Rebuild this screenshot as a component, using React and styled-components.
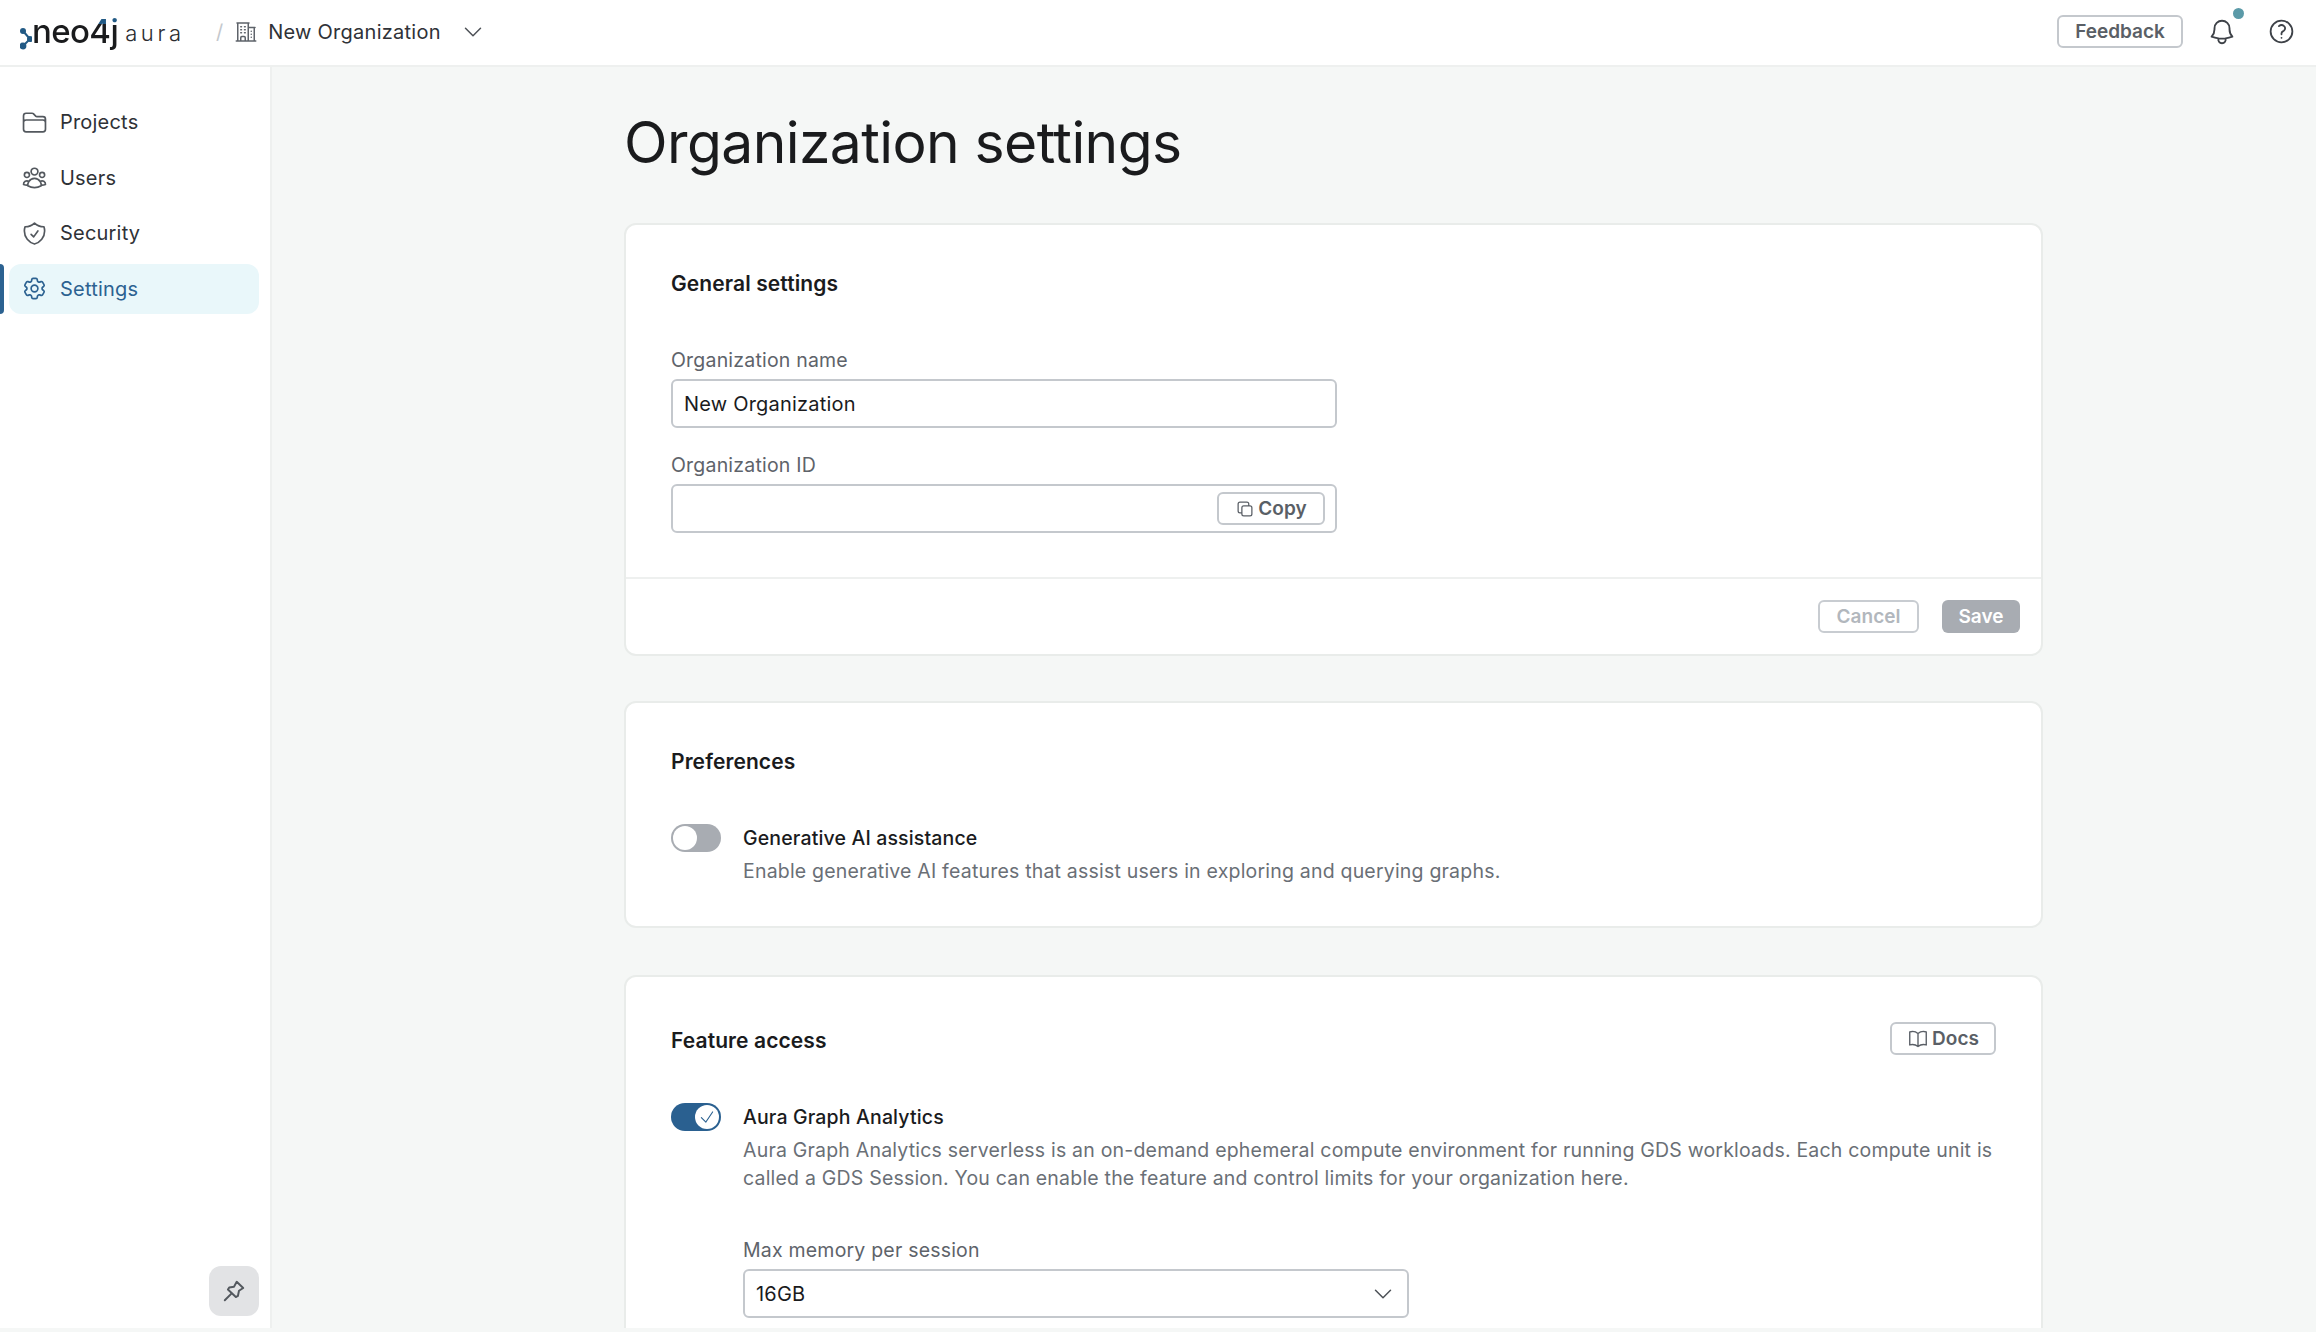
import React from 'react';
import styled, { createGlobalStyle } from 'styled-components';
import {
  HiOutlineFolder, HiOutlineUserGroup, HiOutlineShieldCheck, HiOutlineCog6Tooth,
  HiOutlineBuildingOffice2, HiOutlineChevronDown, HiOutlineBell, HiOutlineQuestionMarkCircle,
  HiOutlineBookOpen, HiOutlineSquare2Stack, HiOutlineCheck,
} from 'react-icons/hi2';

const Global = createGlobalStyle`
  html, body { margin: 0; padding: 0; background: #f5f7f6; height: 100%; overflow: hidden; }
  * { box-sizing: border-box; }
  body { font-family: Inter, "Liberation Sans", sans-serif; color: #1a1b1d; }
`;

const Page = styled.div`display: flex; flex-direction: column; height: 1328px; overflow: hidden;`;

const TopBar = styled.header`
  flex: none; height: 67px; background: #fff; border-bottom: 2px solid #eef0ef;
  display: flex; align-items: center; padding: 0 20px 2px 20px;
`;
const Logo = styled.div`display: flex; align-items: center; width: 178px; height: 65px;`;
const LogoMark = styled.svg`width: 12px; height: 27px; margin-top: 14px; flex: none;`;
const NeoWord = styled.span`
  font-size: 33px; font-weight: 500; line-height: 40px; letter-spacing: -0.6px; margin-top: -1px;
  background: linear-gradient(#225a85 0 13px, #1a1b1d 13px); -webkit-background-clip: text; background-clip: text;
  color: transparent;
`;
const AuraWord = styled.span`
  font-size: 22px; font-weight: 300; line-height: 40px; letter-spacing: 3.6px; margin-left: 7px; color: #2a2c30; margin-top: 2px;
`;
const Slash = styled.span`font-size: 20px; color: #c4c8cd; margin: 0 14px 0 18px;`;
const OrgIcon = styled.span`display: flex; color: #5e636a; font-size: 24px; margin-left: -3px;`;
const OrgName = styled.span`font-size: 20px; color: #2f3237; margin-left: 10px; letter-spacing: 0.25px;`;
const Chevron = styled.span`display: flex; color: #4d5157; font-size: 24px; margin-left: 20px;`;
const Spacer = styled.div`flex: 1;`;
const OutlineButton = styled.button`
  display: inline-flex; align-items: center; justify-content: center; gap: 3px; height: 33px; width: ${p => p.$w}px;
  padding: 0; background: #fff; border: 2px solid ${p => p.$disabled ? '#c8ccd1' : '#c4c8cd'}; border-radius: 6px;
  font: 600 19px Inter, sans-serif; color: ${p => p.$disabled ? '#b2b7bd' : '#5a5f66'};
`;
const IconBtn = styled.span`position: relative; display: flex; color: #3e4248; font-size: ${p => p.$s}px; margin-left: ${p => p.$ml}px;`;
const Dot = styled.span`position: absolute; width: 11px; height: 11px; border-radius: 50%; background: #5b9aa8; top: -9px; right: -7px;`;

const Body = styled.div`flex: 1; display: flex; min-height: 0;`;
const Sidebar = styled.aside`
  width: 272px; flex: none; background: #fff; border-right: 2px solid #eef0ef;
  display: flex; flex-direction: column; justify-content: space-between; padding: 30px 11px 12px 0;
`;
const Nav = styled.nav`display: flex; flex-direction: column; gap: 5.6px;`;
const NavItem = styled.a`
  position: relative; display: flex; align-items: center; gap: 12px; height: 50px; margin-left: 9px; padding-left: 12px;
  border-radius: 12px; font-size: 20px; letter-spacing: 0.2px;
  background: ${p => p.$active ? '#e9f7fa' : 'transparent'}; color: ${p => p.$active ? '#2c6291' : '#2f3237'};
  svg { font-size: 27px; flex: none; color: ${p => p.$active ? '#2c6291' : '#53585e'}; }
`;
const Indicator = styled.span`position: absolute; left: -9px; top: 0; bottom: 0; width: 4px; background: #2c6291; border-radius: 0 4px 4px 0;`;
const PinButton = styled.button`
  align-self: flex-end; width: 50px; height: 50px; border: 0; border-radius: 12px; background: #e2e3e5; color: #53585e;
  display: flex; align-items: center; justify-content: center; padding: 0;
`;

const Main = styled.main`flex: 1; min-width: 0; overflow: hidden; padding: 40px 273px 0 352px;`;
const Title = styled.h1`margin: 0 0 44px; font-size: 57px; font-weight: 400; line-height: 72px; letter-spacing: -0.6px; color: #1a1b1d;`;
const Card = styled.section`
  background: #fff; border: 2px solid #e9ecea; border-radius: 12px; margin-bottom: ${p => p.$mb || 45}px;
`;
const CardBody = styled.div`padding: 45px 45px ${p => p.$pb}px;`;
const Heading = styled.h2`margin: 0; font-size: 21px; font-weight: 600; line-height: 28px; color: #1a1b1d; letter-spacing: 0.1px;`;
const HeadRow = styled.div`display: flex; align-items: flex-end; justify-content: space-between;`;
const Field = styled.div`width: ${p => p.$w || 666}px; display: flex; flex-direction: column; gap: 7px; margin-top: ${p => p.$mt}px;`;
const Label = styled.label`font-size: 19.5px; line-height: 24px; color: #5e636a; letter-spacing: 0.2px;`;
const Box = styled.div`
  height: 49px; background: #fff; border: 2px solid #c4c8cd; border-radius: 6px; display: flex; align-items: center;
  justify-content: space-between; padding: 0 ${p => p.$pr ?? 12}px 0 ${p => p.$pl ?? 11}px; font-size: 20px; color: #1a1b1d; letter-spacing: 0.2px;
`;
const CardFooter = styled.div`
  border-top: 2px solid #eef0ef; display: flex; justify-content: flex-end; gap: 23px; padding: 21px 21px 21px;
`;
const SaveButton = styled.button`
  width: 78px; height: 33px; border: 0; border-radius: 6px; background: #a8acb2; color: #fff; font: 600 19px Inter, sans-serif;
`;
const ToggleRow = styled.div`display: flex; gap: 22px; margin-top: ${p => p.$mt}px;`;
const Toggle = styled.span`
  position: relative; flex: none; width: 50px; height: 28px; border-radius: 14px; background: ${p => p.$on ? '#2a6090' : '#a8acb2'};
`;
const Thumb = styled.span`
  position: absolute; top: 2px; left: ${p => p.$on ? '24px' : '2px'}; width: 24px; height: 24px; border-radius: 50%; background: #fff;
  display: flex; align-items: center; justify-content: center; color: #2a6090; font-size: 18px;
`;
const ToggleText = styled.div`display: flex; flex-direction: column; gap: 5px; flex: 1; min-width: 0;`;
const ToggleTitle = styled.div`font-size: 19.5px; font-weight: 500; line-height: 28px; color: #1a1b1d; letter-spacing: 0.15px;`;
const Description = styled.div`font-size: 19.5px; line-height: 28px; color: #6a6f76; letter-spacing: 0.2px;`;
const SubFields = styled.div`padding-left: 72px;`;

function PinIcon() {
  return (
    <svg width="26" height="26" viewBox="0 0 24 24" fill="none" stroke="currentColor" strokeWidth="1.8" strokeLinejoin="round" strokeLinecap="round">
      <path d="M14.5 3.5 20.5 9.2 16.6 11.8 15.6 16.6 13.7 17.6 6.4 10.6 7.6 8.7 12 8Z" />
      <path d="M9.6 14.4 3.5 20.5" />
    </svg>
  );
}

export default function App() {
  return (
    <Page>
      <Global />
      <TopBar>
        <Logo>
          <LogoMark viewBox="0 0 12 27" aria-hidden="true">
            <g fill="#225a85">
              <circle cx="3" cy="6" r="3" /><circle cx="3" cy="21" r="3.4" /><circle cx="10" cy="14" r="3" />
            </g>
            <path d="M3 6 10 14 3 21" stroke="#225a85" strokeWidth="2" fill="none" />
          </LogoMark>
          <NeoWord>neo4j</NeoWord>
          <AuraWord>aura</AuraWord>
        </Logo>
        <Slash>/</Slash>
        <OrgIcon><HiOutlineBuildingOffice2 /></OrgIcon>
        <OrgName>New Organization</OrgName>
        <Chevron><HiOutlineChevronDown /></Chevron>
        <Spacer />
        <OutlineButton $w={126}>Feedback</OutlineButton>
        <IconBtn $s={30} $ml={24}><HiOutlineBell /><Dot /></IconBtn>
        <IconBtn $s={29} $ml={30}><HiOutlineQuestionMarkCircle /></IconBtn>
      </TopBar>
      <Body>
        <Sidebar>
          <Nav>
            <NavItem><HiOutlineFolder />Projects</NavItem>
            <NavItem><HiOutlineUserGroup />Users</NavItem>
            <NavItem><HiOutlineShieldCheck />Security</NavItem>
            <NavItem $active><Indicator /><HiOutlineCog6Tooth />Settings</NavItem>
          </Nav>
          <PinButton><PinIcon /></PinButton>
        </Sidebar>
        <Main>
          <Title>Organization settings</Title>
          <Card>
            <CardBody $pb={44}>
              <Heading>General settings</Heading>
              <Field $mt={50}>
                <Label>Organization name</Label>
                <Box>New Organization</Box>
              </Field>
              <Field $mt={25}>
                <Label>Organization ID</Label>
                <Box $pr={10}>
                  <span />
                  <OutlineButton $w={108}><HiOutlineSquare2Stack size={20} />Copy</OutlineButton>
                </Box>
              </Field>
            </CardBody>
            <CardFooter>
              <OutlineButton $w={101} $disabled>Cancel</OutlineButton>
              <SaveButton>Save</SaveButton>
            </CardFooter>
          </Card>
          <Card $mb={47}>
            <CardBody $pb={41}>
              <Heading>Preferences</Heading>
              <ToggleRow $mt={48}>
                <Toggle><Thumb /></Toggle>
                <ToggleText>
                  <ToggleTitle>Generative AI assistance</ToggleTitle>
                  <Description>Enable generative AI features that assist users in exploring and querying graphs.</Description>
                </ToggleText>
              </ToggleRow>
            </CardBody>
          </Card>
          <Card>
            <CardBody $pb={45}>
              <HeadRow>
                <Heading>Feature access</Heading>
                <OutlineButton $w={106}><HiOutlineBookOpen size={22} />Docs</OutlineButton>
              </HeadRow>
              <ToggleRow $mt={48}>
                <Toggle $on><Thumb $on><HiOutlineCheck /></Thumb></Toggle>
                <ToggleText>
                  <ToggleTitle>Aura Graph Analytics</ToggleTitle>
                  <Description>
                    Aura Graph Analytics serverless is an on-demand ephemeral compute environment for running GDS workloads. Each compute unit is called a GDS Session. You can enable the feature and control limits for your organization here.
                  </Description>
                </ToggleText>
              </ToggleRow>
              <SubFields>
                <Field $mt={46}>
                  <Label>Max memory per session</Label>
                  <Box>16GB<HiOutlineChevronDown size={24} color="#4d5157" /></Box>
                </Field>
              </SubFields>
            </CardBody>
          </Card>
        </Main>
      </Body>
    </Page>
  );
}
